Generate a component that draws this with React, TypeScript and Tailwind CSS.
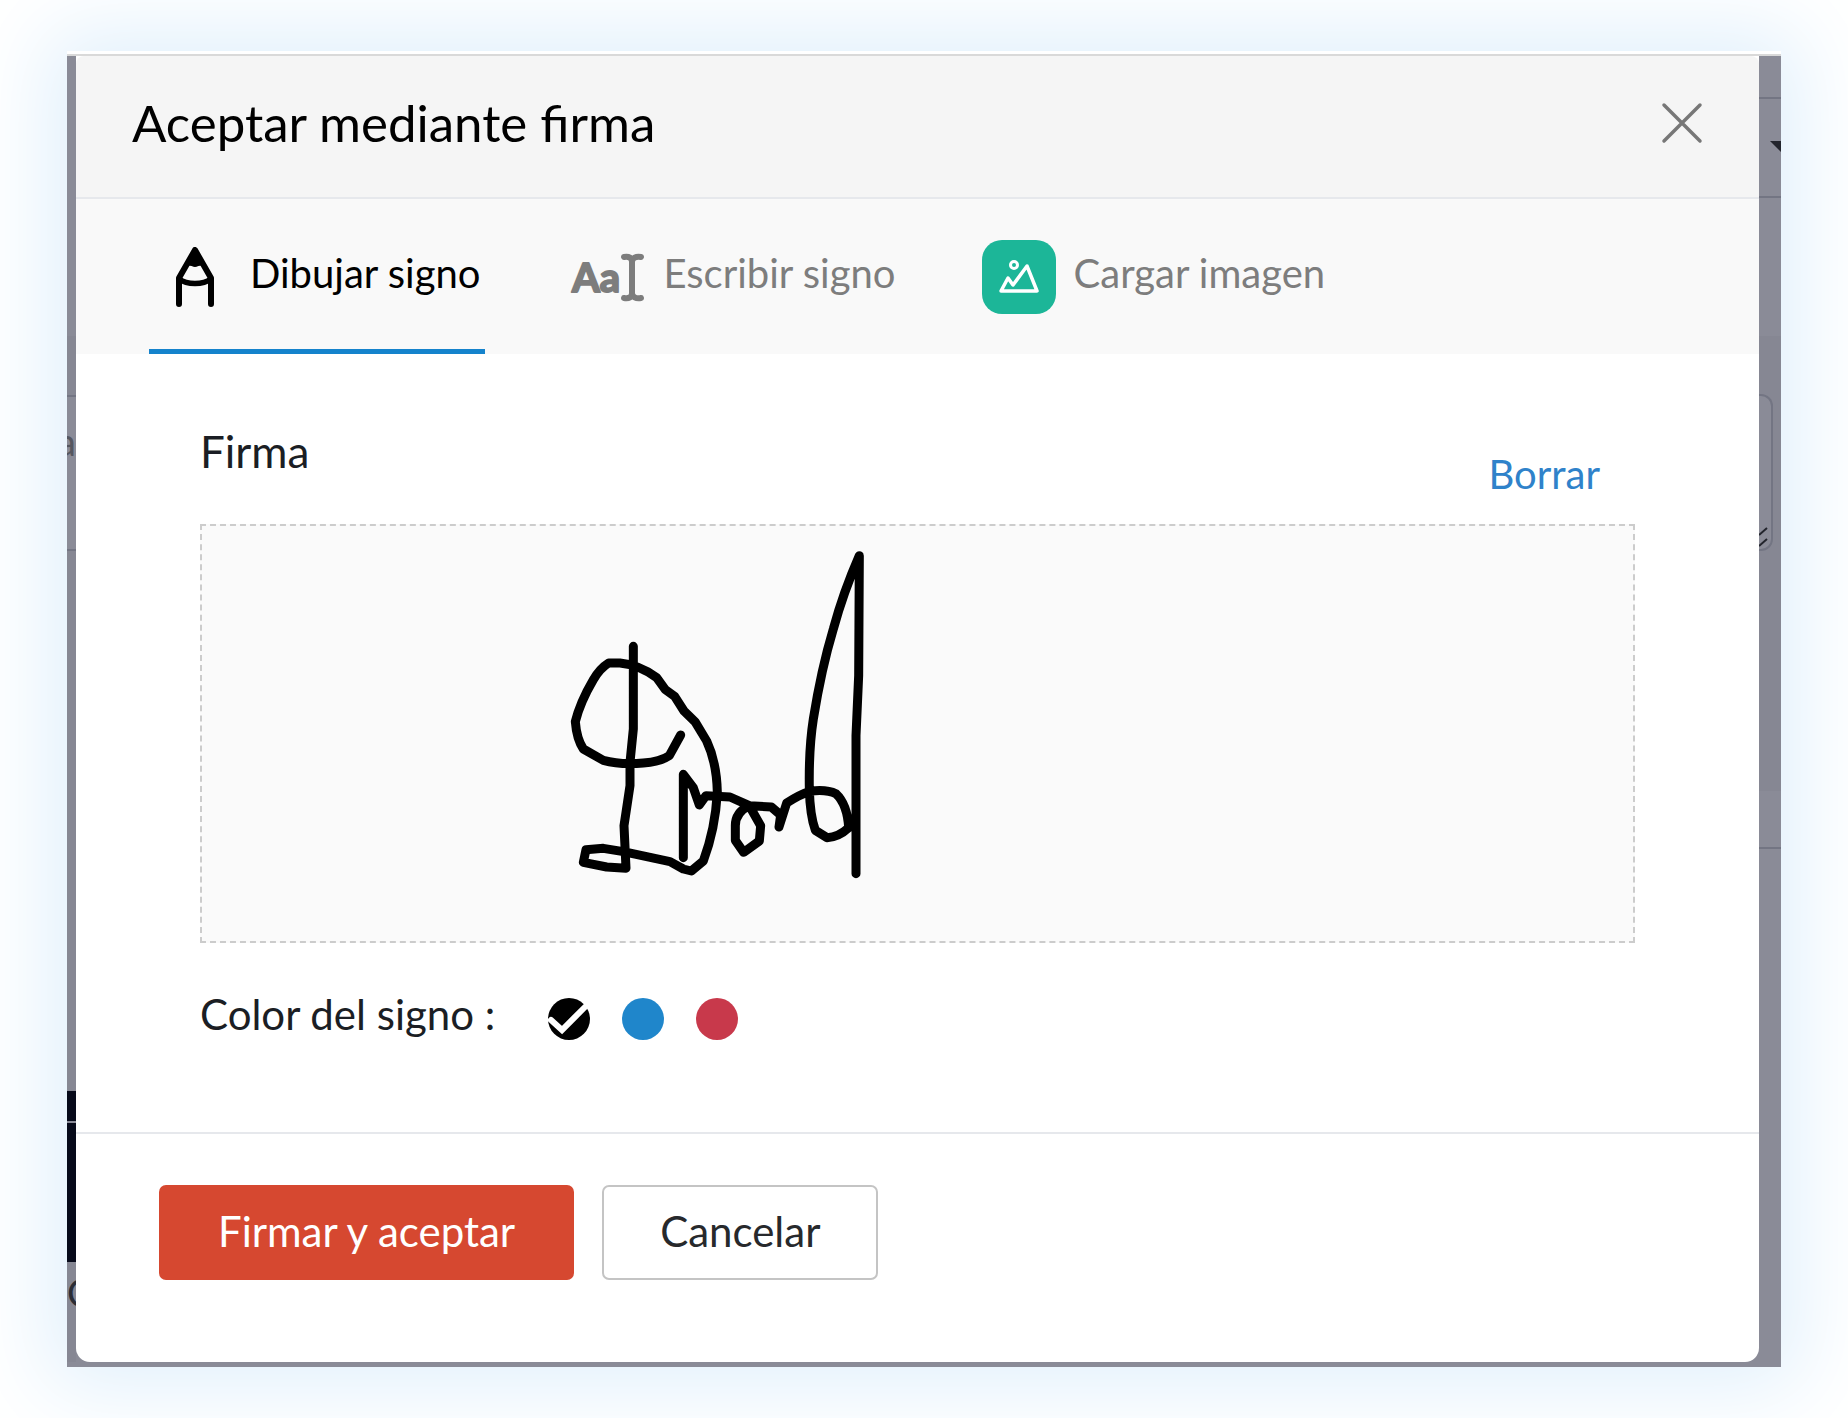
import { useState } from 'react'

type Mode = 'draw' | 'type' | 'upload'

const inks = [
  { id: 'black', label: 'Negro', swatch: 'bg-black', stroke: '#000000' },
  { id: 'blue', label: 'Azul', swatch: 'bg-[#1f86cb]', stroke: '#1f86cb' },
  { id: 'red', label: 'Rojo', swatch: 'bg-[#c8394b]', stroke: '#c8394b' },
]

function PencilIcon() {
  return (
    <svg className="h-[60px] w-[38px]" viewBox="0 0 38 60" fill="none" aria-hidden="true">
      <path d="M3 57V31L19 3l16 28v26" stroke="currentColor" strokeWidth="6" strokeLinecap="round" strokeLinejoin="round" />
      <path d="M3 32c8 6 24 6 32 0" stroke="currentColor" strokeWidth="5.5" />
      <path d="M19 1 10 18c4-2 6 1 9 1s5-3 9-1L19 1Z" fill="currentColor" stroke="currentColor" strokeWidth="2" strokeLinejoin="round" />
    </svg>
  )
}

function TypeIcon() {
  return (
    <svg className="h-[48px] w-[74px] overflow-visible" viewBox="0 0 74 48" fill="none" aria-hidden="true">
      <text
        x="1"
        y="39"
        fontSize="40"
        fontWeight="700"
        fontFamily="Lato, sans-serif"
        fill="currentColor"
        stroke="currentColor"
        strokeWidth="2"
        strokeLinejoin="round"
      >
        Aa
      </text>
      <path
        d="M53 4c5-1 8 1 8 5 0-4 4-6 9-5M61 8v32M53 45c5 1 8-1 8-5 0 4 4 6 9 5"
        stroke="currentColor"
        strokeWidth="6"
        strokeLinecap="round"
        strokeLinejoin="round"
      />
    </svg>
  )
}

function ImageIcon() {
  return (
    <span className="flex size-[74px] items-center justify-center rounded-[20px] bg-[#1cb698] text-white">
      <svg className="h-[36px] w-[42px]" viewBox="0 0 42 36" fill="none" stroke="currentColor" aria-hidden="true">
        <circle cx="16" cy="6" r="3.5" strokeWidth="3" />
        <path d="M3 32 10 19l5 7L29 7l10 25H3Z" strokeWidth="3.5" strokeLinejoin="round" />
      </svg>
    </span>
  )
}

function Signature({ color }: { color: string }) {
  return (
    <svg
      className="h-[370px] w-[360px]"
      viewBox="0 0 1080 1110"
      fill="none"
      stroke={color}
      strokeWidth="27"
      strokeLinecap="round"
      strokeLinejoin="round"
      role="img"
      aria-label="Firma dibujada"
    >
      <path d="M280 352V600L270 700V770L258 850L252 890L258 1018L200 1014L130 1000L138 962L190 958L250 968L390 998L430 1020L454 1026L490 996Q526 900 532 790Q530 700 500 636L465 578L432 546L404 502L376 482L350 446Q300 408 240 402L206 402Q180 418 160 452Q120 520 106 578Q110 630 130 660L190 694Q240 708 310 702Q362 698 388 680L422 618" />
      <path d="M430 986V736L460 776L478 828L498 800L570 804L628 830Q586 850 586 890V934L611 970L658 936L662 890L628 830L694 834L722 858L717 894L740 822Q780 796 812 786Q860 780 888 794Q922 826 926 896Q896 924 861 926L826 904Q810 860 808 780Q806 660 820 570Q844 420 880 300Q910 190 958 80L956 440L948 620V1034" />
    </svg>
  )
}

const tabs = [
  { id: 'draw' as Mode, label: 'Dibujar signo', icon: <PencilIcon /> },
  { id: 'type' as Mode, label: 'Escribir signo', icon: <TypeIcon /> },
  { id: 'upload' as Mode, label: 'Cargar imagen', icon: <ImageIcon /> },
]

// Slices of the dimmed page that stay visible at both sides of the dialog
function LeftEdge() {
  return (
    <div className="flex w-[9px] shrink-0 flex-col overflow-hidden bg-[#868793]" aria-hidden="true">
      <div className="h-[280px] bg-[#8a8b97]" />
      <div className="h-[59px]" />
      <div className="flex h-[156px] flex-col items-end border-y-2 border-[#737583] bg-[#8a8b97] pt-[22px] text-[38px] leading-[44px] text-[#55565f]">
        <span>a</span>
      </div>
      <div className="h-[540px]" />
      <div className="h-[32px] border-b-2 border-[#8a8b97] bg-[#070a1a]" />
      <div className="h-[139px] bg-[#070a1a]" />
      <div className="h-[56px] pt-[8px] text-[38px] leading-[44px] text-[#2b2d35]">C</div>
    </div>
  )
}

function RightEdge() {
  return (
    <div className="flex w-[22px] shrink-0 flex-col overflow-hidden bg-[#8a8b97]" aria-hidden="true">
      <div className="h-[43px] border-b-2 border-[#737583]" />
      <div className="flex h-[99px] flex-col items-end border-b-2 border-[#737583] pt-[42px]">
        <svg className="h-[11px] w-[11px]" viewBox="0 0 11 11">
          <path d="M0 0h11v11Z" fill="#23252d" />
        </svg>
      </div>
      <div className="h-[138px]" />
      <div className="h-[455px] bg-[#868793] pt-[58px]">
        <div className="flex h-[157px] w-[14px] flex-col justify-end rounded-r-[12px] border-2 border-l-0 border-[#737583] bg-[#8a8b97] pb-[2px]">
          <svg className="h-[20px] w-[9px]" viewBox="0 0 9 20" stroke="#23252d" strokeWidth="2">
            <path d="M0 8 8 1M0 19 8 12" />
          </svg>
        </div>
      </div>
      <div className="h-[58px] border-b-2 border-[#737583]" />
    </div>
  )
}

export default function App() {
  const [mode, setMode] = useState<Mode>('draw')
  const [ink, setInk] = useState('black')
  const [signed, setSigned] = useState(true)

  const color = inks.find(i => i.id === ink)?.stroke ?? '#000000'

  return (
    <main className="min-h-screen overflow-hidden bg-white px-[67px] pt-[51px] pb-[51px] font-['Lato','Open_Sans',sans-serif] text-[#1b1e24]">
      <div className="border-t-[3px] border-white shadow-[0_0_80px_20px_#e1f0fc]">
        <div className="flex border-t-2 border-[#d9d9d9] bg-[#8a8b97] pb-[5px]">
          <LeftEdge />
          <section role="dialog" aria-labelledby="dialog-title" className="min-w-0 flex-1 overflow-hidden rounded-b-[14px] bg-white">
            <header className="flex h-[143px] items-center justify-between rounded-t-[8px] border-b-2 border-[#e6e8ec] bg-[#f5f5f5] pr-[56px] pb-[8px] pl-[56px]">
              <h1 id="dialog-title" className="text-[51px] leading-[60px] text-black">Aceptar mediante firma</h1>
              <button type="button" aria-label="Cerrar" className="text-[#777777]">
                <svg className="size-[42px]" viewBox="0 0 42 42" fill="none" stroke="currentColor" strokeWidth="3.5" strokeLinecap="round">
                  <path d="M3 3 39 39M39 3 3 39" />
                </svg>
              </button>
            </header>

            <div role="tablist" className="flex h-[155px] gap-[86px] bg-[#f9f9f9] pl-[73px]">
              {tabs.map(tab => (
                <button
                  key={tab.id}
                  type="button"
                  role="tab"
                  aria-selected={mode === tab.id}
                  onClick={() => setMode(tab.id)}
                  className={`flex items-center border-b-[5px] pt-[6px] text-[40px] leading-[48px] whitespace-nowrap ${
                    tab.id === 'draw' ? 'gap-[36px] pr-[5px] pl-[27px]' : 'gap-[18px]'
                  } ${mode === tab.id ? 'border-[#1583cc] text-black' : 'border-transparent text-[#7d7d7d]'}`}
                >
                  {tab.icon}
                  <span className="pb-[8px]">{tab.label}</span>
                </button>
              ))}
            </div>

            <div className="px-[124px] pt-[70px]">
              <div className="flex h-[100px] items-start justify-between pr-[35px]">
                <h2 className="text-[44px] leading-[54px]">Firma</h2>
                <button type="button" onClick={() => setSigned(false)} className="pt-[26px] text-[40px] leading-[48px] text-[#2f82ca]">
                  Borrar
                </button>
              </div>
              <div className="h-[419px] border-2 border-dashed border-[#cccccc] bg-[#fafafa] pt-[3px] pl-[338px]">
                {signed && <Signature color={color} />}
              </div>

              <div role="radiogroup" aria-labelledby="ink-label" className="flex items-start pt-[44px] pb-[91px]">
                <span id="ink-label" className="pr-[53px] text-[42px] leading-[54px]">Color del signo :</span>
                <div className="flex gap-[32px] pt-[11px]">
                  {inks.map(item => (
                    <label key={item.id} className={`flex size-[42px] cursor-pointer items-center justify-center rounded-full ${item.swatch}`}>
                      <input
                        type="radio"
                        name="ink"
                        value={item.id}
                        aria-label={item.label}
                        checked={ink === item.id}
                        onChange={() => setInk(item.id)}
                        className="sr-only"
                      />
                      {ink === item.id && (
                        <svg className="size-[42px]" viewBox="0 0 42 42" fill="none" stroke="white" strokeWidth="6" strokeLinecap="round" aria-hidden="true">
                          <path d="M3 22 14 32 37 9" />
                        </svg>
                      )}
                    </label>
                  ))}
                </div>
              </div>
            </div>

            <footer className="flex gap-[28px] border-t-2 border-[#e6e8ec] px-[83px] pt-[51px] pb-[82px]">
              <button type="button" className="h-[95px] rounded-[7px] bg-[#d64830] px-[59px] pb-[3px] text-[42px] leading-[54px] text-white">
                Firmar y aceptar
              </button>
              <button type="button" className="h-[95px] rounded-[7px] border-2 border-[#c4c4c4] bg-white px-[56px] pb-[3px] text-[42px] leading-[54px] text-[#27292c]">
                Cancelar
              </button>
            </footer>
          </section>
          <RightEdge />
        </div>
      </div>
    </main>
  )
}
